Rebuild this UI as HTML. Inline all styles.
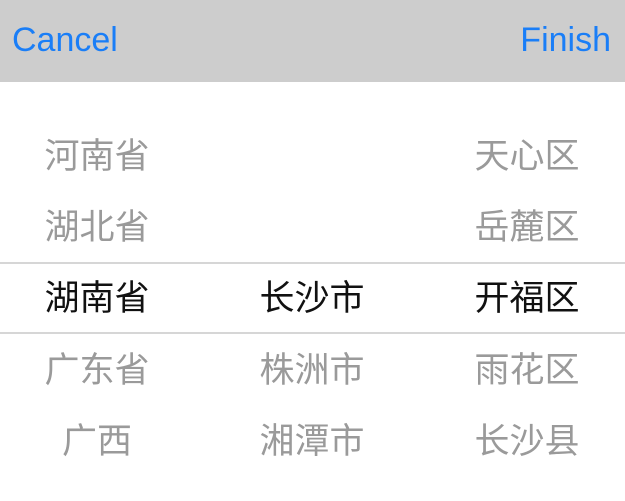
<!DOCTYPE html>
<html><head><meta charset="utf-8"><style>
body{margin:0;width:625px;height:501px;background:#fff;overflow:hidden;font-family:"Liberation Sans","Noto Sans CJK SC",sans-serif;position:relative}
.hd{position:absolute;left:0;top:0;width:625px;height:82px;background:#cdcdcd}
.b{position:absolute;top:20px;font-size:34px;color:#1a7ef7;line-height:40px}
.line{position:absolute;left:0;width:625px;height:2px;background:#d6d6d6}
.t{position:absolute;width:160px;text-align:center;font-size:35px;line-height:40px;color:#9a9a9a;margin-left:-80px}
.k{color:#111}
</style></head><body>
<div class="hd"></div>
<div class="b" style="left:12px">Cancel</div>
<div class="b" style="right:14px">Finish</div>
<div class="line" style="top:262px"></div>
<div class="line" style="top:332px"></div>

<div class="t" style="left:97px;top:137px">河南省</div>
<div class="t" style="left:527px;top:137px">天心区</div>
<div class="t" style="left:97px;top:208px">湖北省</div>
<div class="t" style="left:527px;top:208px">岳麓区</div>
<div class="t k" style="left:97px;top:279px">湖南省</div>
<div class="t k" style="left:312px;top:279px">长沙市</div>
<div class="t k" style="left:527px;top:279px">开福区</div>
<div class="t" style="left:97px;top:351px">广东省</div>
<div class="t" style="left:312px;top:351px">株洲市</div>
<div class="t" style="left:527px;top:351px">雨花区</div>
<div class="t" style="left:97px;top:422px">广西</div>
<div class="t" style="left:312px;top:422px">湘潭市</div>
<div class="t" style="left:527px;top:422px">长沙县</div>
</body></html>
